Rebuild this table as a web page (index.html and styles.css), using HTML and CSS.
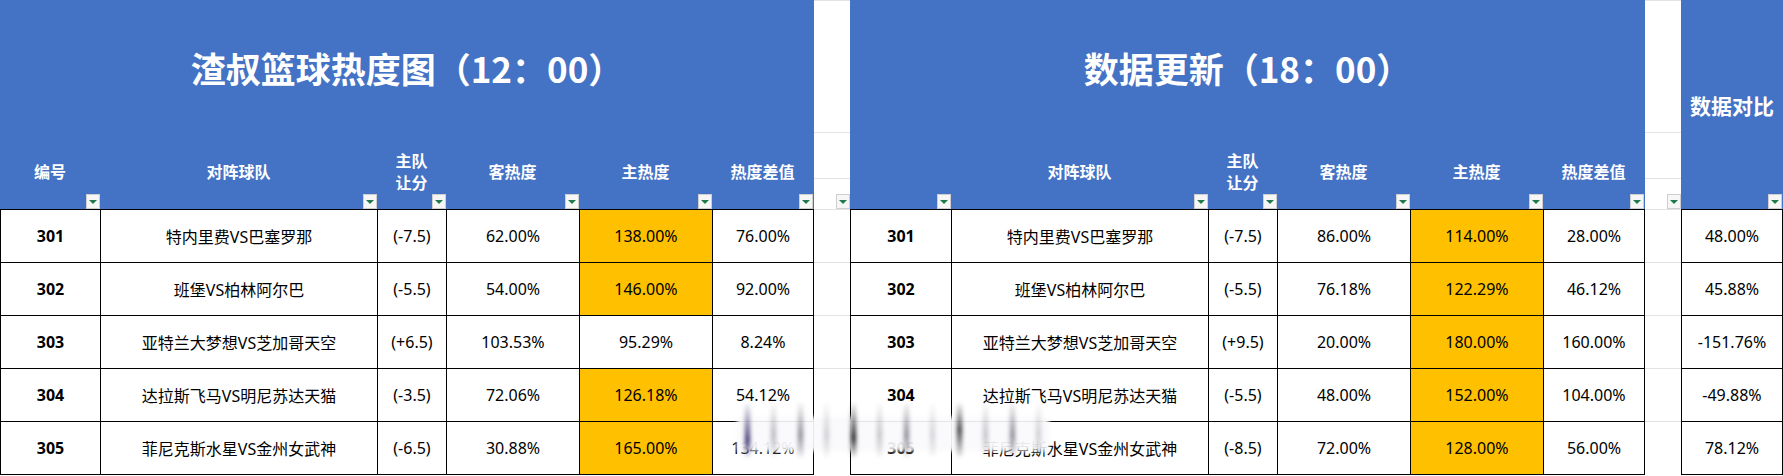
FILE: index.html
```html
<!DOCTYPE html>
<html lang="zh-CN">
<head>
<meta charset="utf-8">
<title>渣叔篮球热度图</title>
<link rel="stylesheet" href="styles.css">
</head>
<body>
<div class="page">

  <section class="sheet sheet-a">
    <div class="head">
      <div class="title">渣叔篮球热度图（12：00）</div>
      <div class="labels">
        <div class="label">编号<span class="filter"></span></div>
        <div class="label">对阵球队<span class="filter"></span></div>
        <div class="label">主队<br>让分<span class="filter"></span></div>
        <div class="label">客热度<span class="filter"></span></div>
        <div class="label">主热度<span class="filter"></span></div>
        <div class="label">热度差值<span class="filter"></span></div>
      </div>
    </div>
    <div class="rows">
      <div class="cell num">301</div><div class="cell">特内里费VS巴塞罗那</div><div class="cell">(-7.5)</div><div class="cell">62.00%</div><div class="cell hot">138.00%</div><div class="cell">76.00%</div>
      <div class="cell num">302</div><div class="cell">班堡VS柏林阿尔巴</div><div class="cell">(-5.5)</div><div class="cell">54.00%</div><div class="cell hot">146.00%</div><div class="cell">92.00%</div>
      <div class="cell num">303</div><div class="cell">亚特兰大梦想VS芝加哥天空</div><div class="cell">(+6.5)</div><div class="cell">103.53%</div><div class="cell">95.29%</div><div class="cell">8.24%</div>
      <div class="cell num">304</div><div class="cell">达拉斯飞马VS明尼苏达天猫</div><div class="cell">(-3.5)</div><div class="cell">72.06%</div><div class="cell hot">126.18%</div><div class="cell">54.12%</div>
      <div class="cell num">305</div><div class="cell">菲尼克斯水星VS金州女武神</div><div class="cell">(-6.5)</div><div class="cell">30.88%</div><div class="cell hot">165.00%</div><div class="cell">134.12%</div>
    </div>
  </section>

  <div class="gap">
    <div class="gap-head">
      <div class="g1"></div>
      <div class="g2"></div>
      <div class="g3"><span class="filter"></span></div>
    </div>
    <div class="gap-row"></div><div class="gap-row"></div><div class="gap-row"></div><div class="gap-row"></div><div class="gap-row"></div>
  </div>

  <section class="sheet sheet-b">
    <div class="head">
      <div class="title">数据更新（18：00）</div>
      <div class="labels">
        <div class="label"><span class="filter"></span></div>
        <div class="label">对阵球队<span class="filter"></span></div>
        <div class="label">主队<br>让分<span class="filter"></span></div>
        <div class="label">客热度<span class="filter"></span></div>
        <div class="label">主热度<span class="filter"></span></div>
        <div class="label">热度差值<span class="filter"></span></div>
      </div>
    </div>
    <div class="rows">
      <div class="cell num">301</div><div class="cell">特内里费VS巴塞罗那</div><div class="cell">(-7.5)</div><div class="cell">86.00%</div><div class="cell hot">114.00%</div><div class="cell">28.00%</div>
      <div class="cell num">302</div><div class="cell">班堡VS柏林阿尔巴</div><div class="cell">(-5.5)</div><div class="cell">76.18%</div><div class="cell hot">122.29%</div><div class="cell">46.12%</div>
      <div class="cell num">303</div><div class="cell">亚特兰大梦想VS芝加哥天空</div><div class="cell">(+9.5)</div><div class="cell">20.00%</div><div class="cell hot">180.00%</div><div class="cell">160.00%</div>
      <div class="cell num">304</div><div class="cell">达拉斯飞马VS明尼苏达天猫</div><div class="cell">(-5.5)</div><div class="cell">48.00%</div><div class="cell hot">152.00%</div><div class="cell">104.00%</div>
      <div class="cell num">305</div><div class="cell">菲尼克斯水星VS金州女武神</div><div class="cell">(-8.5)</div><div class="cell">72.00%</div><div class="cell hot">128.00%</div><div class="cell">56.00%</div>
    </div>
  </section>

  <div class="gap">
    <div class="gap-head">
      <div class="g1"></div>
      <div class="g2"></div>
      <div class="g3"><span class="filter"></span></div>
    </div>
    <div class="gap-row"></div><div class="gap-row"></div><div class="gap-row"></div><div class="gap-row"></div><div class="gap-row"></div>
  </div>

  <section class="sheet sheet-c">
    <div class="head head-c">
      <div class="compare-title">数据对比</div>
      <span class="filter"></span>
    </div>
    <div class="rows">
      <div class="cell">48.00%</div>
      <div class="cell">45.88%</div>
      <div class="cell">-151.76%</div>
      <div class="cell">-49.88%</div>
      <div class="cell">78.12%</div>
    </div>
  </section>

  <div class="watermark">
    <span class="s1"></span><span class="s2"></span><span class="s3"></span><span class="s4"></span><span class="s5"></span><span class="s6"></span><span class="s7"></span><span class="s8"></span><span class="s9"></span><span class="s10"></span><span class="s11"></span><span class="s12"></span>
  </div>
</div>
</body>
</html>
```

FILE: styles.css
```css
* { box-sizing: border-box; }

body {
  margin: 0;
  background: #fff;
  font-family: "Noto Sans", "Noto Sans CJK SC", sans-serif;
  color: #000;
}

.page {
  position: relative;
  display: flex;
  width: 1783px;
  height: 476px;
  overflow: hidden;
}

.sheet {
  display: flex;
  flex-direction: column;
}

.sheet-a { width: 814px; --cols: 100px 277px 69px 133px 133px 101px; }
.sheet-b { width: 795px; --cols: 101px 257px 69px 133px 133px 101px; }
.sheet-c { width: 102px; --cols: 101px; }

.head {
  position: relative;
  height: 209px;
  background: #4472c4;
  color: #fff;
  display: flex;
  flex-direction: column;
}

.title {
  height: 133px;
  display: flex;
  align-items: center;
  justify-content: center;
  font-family: "Noto Sans CJK SC", sans-serif;
  font-size: 35px;
  font-weight: 700;
  padding-top: 2px;
}

.labels {
  height: 76px;
  display: grid;
  grid-template-columns: var(--cols);
  padding-right: 1px;
}

.label {
  position: relative;
  display: flex;
  align-items: center;
  justify-content: center;
  text-align: center;
  font-family: "Noto Sans CJK SC", sans-serif;
  font-size: 16px;
  font-weight: 700;
  line-height: 22px;
}

.filter {
  position: absolute;
  right: 0;
  bottom: 0;
  width: 14px;
  height: 15px;
  background: #f6f6f6;
  border: 1px solid #cfcfcf;
  display: flex;
  align-items: center;
  justify-content: center;
}

.filter::after {
  content: "";
  border-left: 4px solid transparent;
  border-right: 4px solid transparent;
  border-top: 4px solid #1f7a4c;
  margin-top: 1px;
}

.head-c {
  align-items: center;
  justify-content: center;
}

.head-c .filter { right: 1px; }

.compare-title {
  font-family: "Noto Sans CJK SC", sans-serif;
  font-size: 21px;
  font-weight: 700;
}

.rows {
  display: grid;
  grid-template-columns: var(--cols);
  grid-auto-rows: 53px;
  border-right: 1px solid #000;
  border-bottom: 1px solid #000;
}

.cell {
  display: flex;
  align-items: center;
  justify-content: center;
  border-top: 1px solid #000;
  border-left: 1px solid #000;
  font-size: 16px;
  white-space: nowrap;
}

.cell.num { font-weight: 700; }
.cell.hot { background: #ffc000; }

.gap {
  width: 36px;
  display: flex;
  flex-direction: column;
}

.gap-head {
  height: 209px;
  display: flex;
  flex-direction: column;
  border-top: 1px solid #e2e2e2;
}

.gap-head .g1 { height: 132px; border-bottom: 1px solid #e2e2e2; }
.gap-head .g2 { height: 46px; border-bottom: 1px solid #e2e2e2; }
.gap-head .g3 { flex: 1; position: relative; }

.gap-row {
  height: 53px;
  border-top: 1px solid #e2e2e2;
}

.watermark {
  position: absolute;
  left: 737px;
  top: 403px;
  width: 312px;
  height: 54px;
  display: flex;
  align-items: stretch;
  justify-content: space-between;
  padding: 0 8px;
}

.watermark::before {
  content: "";
  position: absolute;
  left: 0;
  right: 0;
  top: 14px;
  height: 34px;
  background: rgba(250, 250, 252, 0.93);
  filter: blur(2px);
}

.watermark span {
  position: relative;
  width: 5px;
  border-radius: 3px;
  background: linear-gradient(to bottom, rgba(60, 60, 80, 0.05), rgba(40, 40, 60, 0.55) 60%, rgba(60, 60, 80, 0.1));
  filter: blur(2px);
}

.watermark .s1 { background: linear-gradient(to bottom, rgba(60,60,100,0.05), rgba(30,20,90,0.9) 70%, rgba(60,60,80,0.1)); }
.watermark .s2 { opacity: 0.6; }
.watermark .s4 { opacity: 0.4; }
.watermark .s5 { background: linear-gradient(to bottom, rgba(60,60,80,0.05), rgba(10,10,10,0.95) 65%, rgba(60,60,80,0.1)); }
.watermark .s6 { opacity: 0.5; }
.watermark .s8 { opacity: 0.35; }
.watermark .s9 { background: linear-gradient(to bottom, rgba(60,60,80,0.05), rgba(20,20,20,0.85) 50%, rgba(60,60,80,0.1)); }
.watermark .s10 { opacity: 0.5; }
.watermark .s12 { opacity: 0.4; }
```
